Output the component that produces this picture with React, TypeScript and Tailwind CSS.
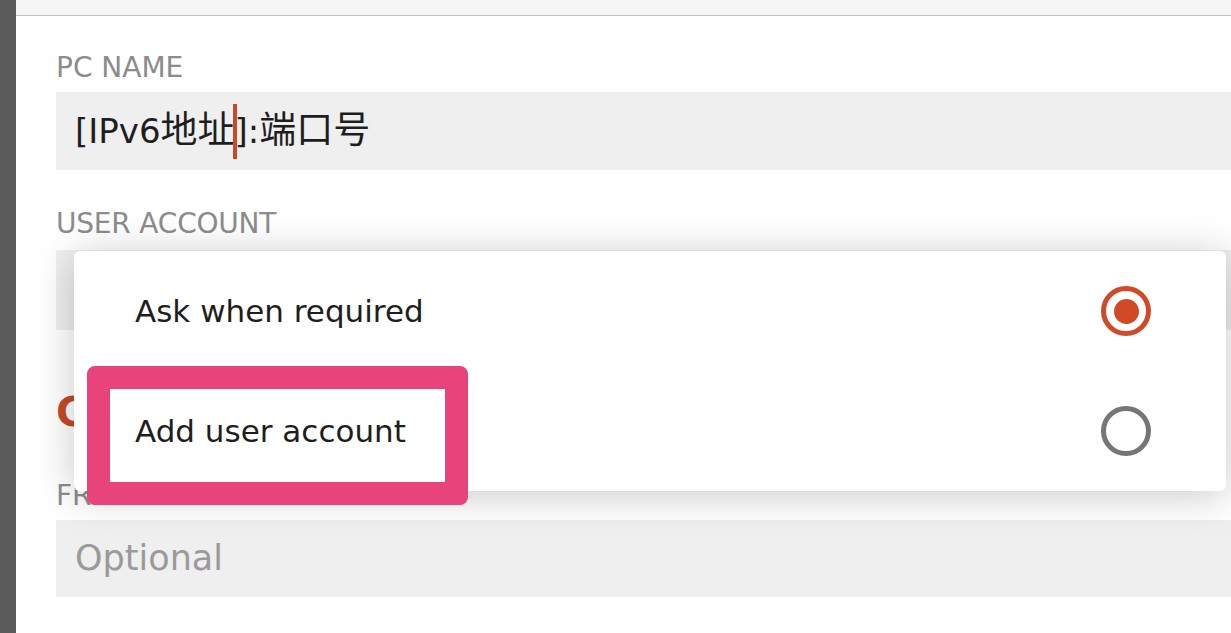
import React from "react";

const font = { fontFamily: '"DejaVu Sans", "Noto Sans CJK SC", sans-serif' };

export default function App() {
  return (
    <div className="relative flex w-[1231px] h-[633px] overflow-hidden bg-white" style={font}>
      <div className="w-[16px] shrink-0 bg-[#5b5b5b]" />
      <div className="flex-1 flex flex-col">
        <div className="h-[16px] shrink-0 bg-[#f6f6f6] border-b border-[#c2c2c2]" />
        <div className="flex flex-col pl-[40px]">
          <div className="mt-[34px] text-[28px] leading-[36px] text-[#8c8c8c]">PC NAME</div>
          <div className="mt-[6px] h-[78px] bg-[#efefef] flex items-center pl-[19px] text-[34px] text-[#1e1e1e]">
            <span>[IPv6</span>
            <span className="text-[37px]">地址</span>
            <span className="inline-block w-[4px] h-[55px] bg-[#c94a2b] -ml-[2px] -mr-[2px]" />
            <span>]:</span>
            <span className="text-[37px]">端口号</span>
          </div>
          <div className="mt-[36px] text-[28px] leading-[36px] text-[#8c8c8c] tracking-[-0.2px]">USER ACCOUNT</div>
          <div className="mt-[8px] h-[80px] bg-[#efefef]" />
          <div className="mt-[58px] text-[40px] leading-[48px] font-bold text-[#c9492a]">General</div>
          <div className="mt-[42px] text-[28px] leading-[36px] text-[#8c8c8c]">FRIENDLY NAME</div>
          <div className="mt-[6px] h-[77px] bg-[#efefef] flex items-center pl-[19px] text-[35px] text-[#9a9a9a]">Optional</div>
        </div>
      </div>

      {/* dropdown popup */}
      <div className="absolute left-[74px] top-[251px] w-[1152px] h-[240px] bg-white rounded-[6px] shadow-[0_4px_40px_rgba(0,0,0,0.22)] flex flex-col">
        <div className="h-[120px] flex items-center justify-between pl-[61px] pr-[75px]">
          <span className="text-[31px] text-[#1e1e1e]">Ask when required</span>
          <span className="w-[50px] h-[50px] rounded-full border-[5px] border-[#d04a28] flex items-center justify-center">
            <span className="w-[25px] h-[25px] rounded-full bg-[#d04a28]" />
          </span>
        </div>
        <div className="h-[120px] flex items-center justify-between pl-[61px] pr-[75px]">
          <span className="text-[31px] text-[#1e1e1e]">Add user account</span>
          <span className="w-[50px] h-[50px] rounded-full border-[5px] border-[#767676]" />
        </div>
      </div>

      {/* highlight annotation */}
      <div className="absolute left-[87px] top-[366px] w-[381px] h-[139px] rounded-[8px] border-[23px] border-[#e8437a]" />
    </div>
  );
}
